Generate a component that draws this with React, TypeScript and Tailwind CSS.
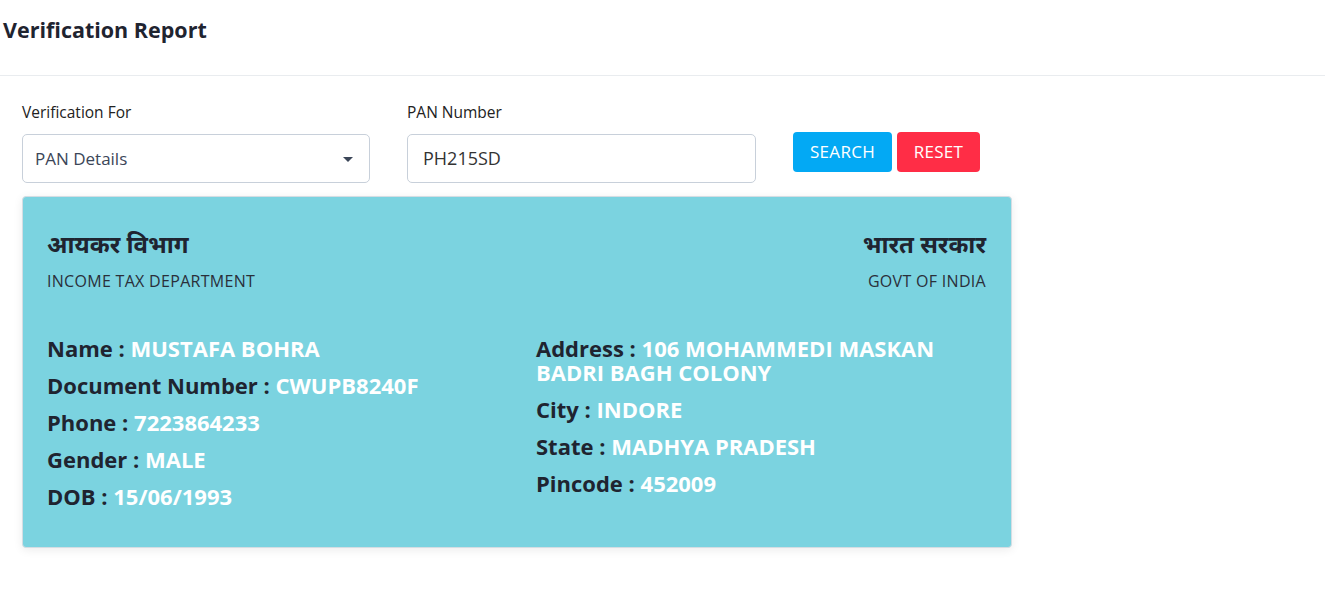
export default function App() {
  const left = [
    { label: 'Name', value: ['MUSTAFA BOHRA'] },
    { label: 'Document Number', value: ['CWUPB8240F'] },
    { label: 'Phone', value: ['7223864233'] },
    { label: 'Gender', value: ['MALE'] },
    { label: 'DOB', value: ['15/06/1993'] },
  ];
  const right = [
    { label: 'Address', value: ['106 MOHAMMEDI MASKAN', 'BADRI BAGH COLONY'] },
    { label: 'City', value: ['INDORE'] },
    { label: 'State', value: ['MADHYA PRADESH'] },
    { label: 'Pincode', value: ['452009'] },
  ];

  const Row = ({ label, value }: { label: string; value: string[] }) => (
    <div className="text-[22px] leading-[24px] font-bold text-[#1f2430]">
      <div>
        {label} : <span className="text-white">{value[0]}</span>
      </div>
      {value.slice(1).map((v) => (
        <div key={v} className="text-white">{v}</div>
      ))}
    </div>
  );

  return (
    <div className="min-h-screen bg-white text-[#212529] font-['Open_Sans','Noto_Sans',sans-serif]">
      <div className="h-[76px] border-b border-[#e9ecef] px-[3px] pt-[16px]">
        <h1 className="text-[21.5px] leading-[28px] font-bold text-[#1f2430]">Verification Report</h1>
      </div>

      <div className="px-[22px] pt-[25px]">
        <div className="flex items-start">
          <div className="w-[348px]">
            <label className="block text-[15.5px] leading-[22px] text-[#222] mb-[11px]">Verification For</label>
            <div className="h-[49px] border border-[#c8d0da] rounded-[5px] flex items-center justify-between pl-[12px] pr-[16px]">
              <span className="text-[17px] text-[#3b4658]">PAN Details</span>
              <svg width="10" height="6" viewBox="0 0 10 6" className="mt-[2px]">
                <path d="M0 0 L10 0 L5 5 Z" fill="#3b4658" />
              </svg>
            </div>
          </div>

          <div className="w-[349px] ml-[37px]">
            <label className="block text-[15.5px] leading-[22px] text-[#222] mb-[11px]">PAN Number</label>
            <div className="h-[49px] border border-[#c8d0da] rounded-[5px] flex items-center pl-[15px]">
              <span className="text-[18px] text-[#333]">PH215SD</span>
            </div>
          </div>

          <div className="ml-[37px] mt-[31px] flex gap-[5px]">
            <button className="h-[40px] w-[99px] rounded-[4px] bg-[#03a9f4] text-white text-[17px] tracking-[0.3px]">SEARCH</button>
            <button className="h-[40px] w-[83px] rounded-[4px] bg-[#ff2d46] text-white text-[17px] tracking-[0.3px]">RESET</button>
          </div>
        </div>

        <div className="mt-[13px] w-[990px] h-[352px] bg-[#7bd3e0] border border-[#d4dde3] rounded-[4px] shadow-[0_2px_10px_rgba(0,0,0,0.08)] pl-[24px] pr-[25px] pt-[33px]">
          <div className="flex justify-between">
            <div>
              <div className="text-[24px] leading-[28px] font-bold text-[#1f2430]">आयकर विभाग</div>
              <div className="mt-[13px] text-[16px] leading-[20px] tracking-[0.3px] text-[#2a2f3a]">INCOME TAX DEPARTMENT</div>
            </div>
            <div className="text-right">
              <div className="text-[24px] leading-[28px] font-bold text-[#1f2430]">भारत सरकार</div>
              <div className="mt-[13px] text-[16px] leading-[20px] tracking-[0.3px] text-[#2a2f3a]">GOVT OF INDIA</div>
            </div>
          </div>

          <div className="mt-[45px] grid grid-cols-[489px_1fr]">
            <div className="flex flex-col gap-[13px]">
              {left.map((r) => (
                <Row key={r.label} label={r.label} value={r.value} />
              ))}
            </div>
            <div className="flex flex-col gap-[13px] pr-[30px]">
              {right.map((r) => (
                <Row key={r.label} label={r.label} value={r.value} />
              ))}
            </div>
          </div>
        </div>
      </div>
    </div>
  );
}
